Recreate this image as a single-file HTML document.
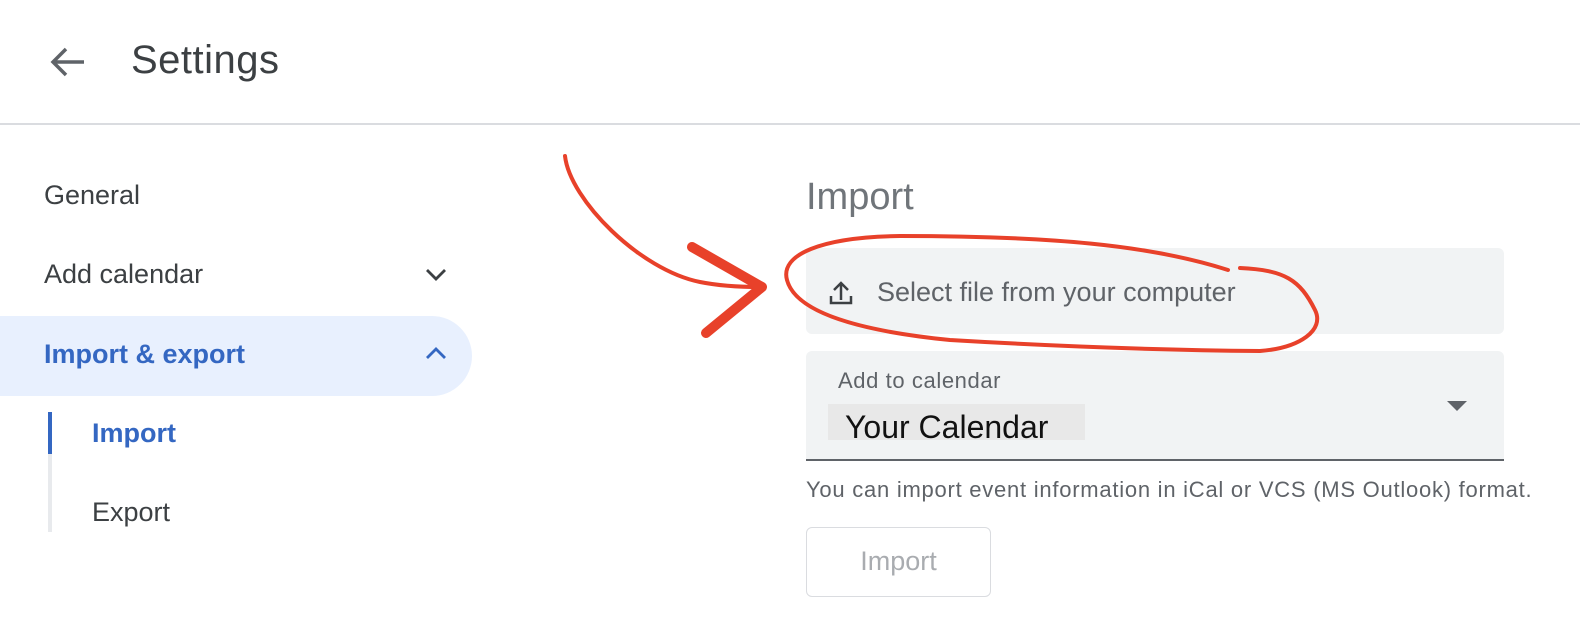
<html><head><style>
body{margin:0;width:1580px;height:622px;background:#fff;font-family:"Liberation Sans",Arial,sans-serif;position:relative;overflow:hidden}
.a{position:absolute;white-space:nowrap}
</style></head><body>
<svg class="a" style="left:48px;top:44px" width="40" height="36" viewBox="0 0 40 36"><path d="M36 18H6M18 5L5 18l13 13" stroke="#5f6368" stroke-width="3.5" fill="none"/></svg>
<div class="a" style="left:131px;top:38px;font-size:40px;color:#3c4043;letter-spacing:0.5px">Settings</div>
<div class="a" style="left:0;top:123px;width:1580px;height:2px;background:#dadce0"></div>
<div class="a" style="left:44px;top:180px;font-size:27px;color:#3c4043">General</div>
<div class="a" style="left:44px;top:259px;font-size:27px;color:#3c4043">Add calendar</div>
<svg class="a" style="left:424px;top:266px" width="24" height="18"><path d="M3 4l9 9 9-9" stroke="#3c4043" stroke-width="2.8" fill="none"/></svg>
<div class="a" style="left:0;top:316px;width:472px;height:80px;background:#e8f0fe;border-radius:0 40px 40px 0"></div>
<div class="a" style="left:44px;top:339px;font-size:27px;color:#3467c2;font-weight:bold">Import &amp; export</div>
<svg class="a" style="left:424px;top:344px" width="24" height="18"><path d="M3 14l9-9 9 9" stroke="#3467c2" stroke-width="2.8" fill="none"/></svg>
<div class="a" style="left:48px;top:412px;width:4px;height:120px;background:#e8eaed"></div>
<div class="a" style="left:48px;top:412px;width:4px;height:42px;background:#3467c2"></div>
<div class="a" style="left:92px;top:418px;font-size:27px;color:#3467c2;font-weight:bold">Import</div>
<div class="a" style="left:92px;top:497px;font-size:27px;color:#3c4043">Export</div>
<div class="a" style="left:806px;top:176px;font-size:38px;color:#70757a">Import</div>
<div class="a" style="left:806px;top:248px;width:698px;height:86px;background:#f1f3f4;border-radius:6px"></div>
<svg class="a" style="left:828px;top:280px" width="26" height="26" viewBox="0 0 26 26"><path d="M13 20V4M6 10l7-7 7 7M3 16v7h20v-7" stroke="#3c4043" stroke-width="2.5" fill="none"/></svg>
<div class="a" style="left:877px;top:277px;font-size:27px;color:#5f6368">Select file from your computer</div>
<div class="a" style="left:806px;top:351px;width:698px;height:108px;background:#f1f3f4;border-radius:6px 6px 0 0;border-bottom:2px solid #5f6368"></div>
<div class="a" style="left:838px;top:368px;font-size:22px;color:#5f6368;letter-spacing:0.6px">Add to calendar</div>
<div class="a" style="left:828px;top:404px;width:257px;height:36px;background:#e8e8e8"></div>
<div class="a" style="left:845px;top:409px;font-size:32px;color:#111">Your Calendar</div>
<svg class="a" style="left:1446px;top:400px" width="22" height="12"><path d="M1 1h20L11 11z" fill="#5f6368"/></svg>
<div class="a" style="left:806px;top:477px;font-size:22px;color:#5f6368;letter-spacing:0.75px">You can import event information in iCal or VCS (MS Outlook) format.</div>
<div class="a" style="left:806px;top:527px;width:185px;height:70px;border:1.5px solid #dadce0;border-radius:6px;box-sizing:border-box;text-align:center;line-height:67px;font-size:27px;color:#a9acb0">Import</div>
<svg class="a" style="left:0;top:0" width="1580" height="622">
<g stroke="#e8412a" stroke-linecap="round" stroke-linejoin="round" fill="none">
<path d="M565 156C570 200 640 270 700 282C720 286 740 287 760 287" stroke-width="4"/>
<path d="M692 247L762 287L706 333" stroke-width="10"/>
<path d="M1228 270C1150 245 1050 236 900 236C820 237 780 255 787 280C795 310 850 330 950 340C1050 346 1150 350 1260 351C1300 348 1325 330 1315 310C1300 280 1285 270 1240 268" stroke-width="4"/>
</g></svg>
</body></html>
